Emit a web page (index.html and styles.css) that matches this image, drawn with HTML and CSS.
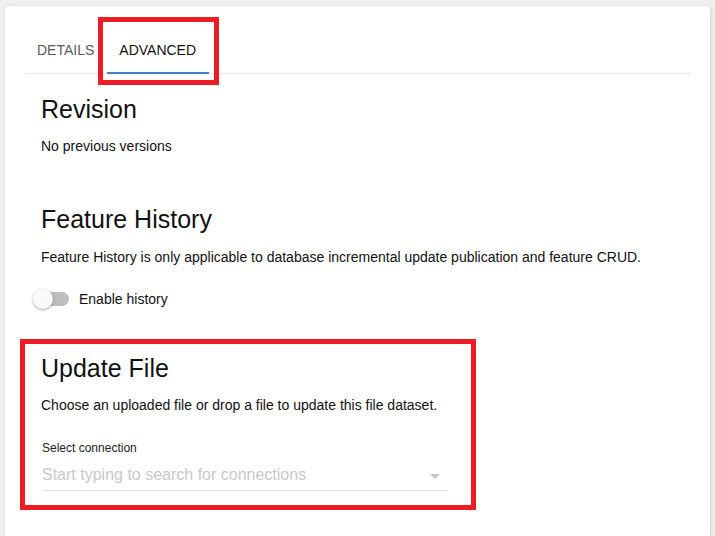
FILE: index.html
```html
<!DOCTYPE html>
<html lang="en">
<head>
    <meta charset="UTF-8">
    <meta name="viewport" content="width=device-width, initial-scale=1.0">
    <title>Dataset Settings</title>
    <link rel="stylesheet" href="styles.css">
</head>
<body>
    <div class="card">
        <div class="tabs">
            <div class="tab">DETAILS</div>
            <div class="tab active">ADVANCED</div>
        </div>

        <div class="content">
            <div class="section revision">
                <h2>Revision</h2>
                <p>No previous versions</p>
            </div>

            <div class="section history">
                <h2>Feature History</h2>
                <p>Feature History is only applicable to database incremental update publication and feature CRUD.</p>
                <label class="toggle-row">
                    <span class="toggle"><span class="knob"></span></span>
                    <span class="toggle-label">Enable history</span>
                </label>
            </div>

            <div class="section update">
                <h2>Update File</h2>
                <p>Choose an uploaded file or drop a file to update this file dataset.</p>
                <div class="field">
                    <div class="field-label">Select connection</div>
                    <div class="field-input">
                        <span class="placeholder">Start typing to search for connections</span>
                        <span class="arrow"></span>
                    </div>
                </div>
            </div>
        </div>
    </div>

    <!-- annotation boxes -->
    <div class="mark mark-tab"></div>
    <div class="mark mark-update"></div>
</body>
</html>
```

FILE: styles.css
```css
body {
    font-family: "Liberation Sans", Arial, sans-serif;
    background-color: #efefef;
    margin: 0;
    padding: 6px 5px 0 5px;
    color: #111;
    height: 536px;
    box-sizing: border-box;
    overflow: hidden;
}
.card {
    background-color: #fff;
    border-radius: 4px 4px 0 0;
    box-shadow: 1px 1px 4px rgba(0, 0, 0, 0.12);
    padding: 20px 20px 0 20px;
    height: 530px;
    box-sizing: border-box;
}
.tabs {
    display: flex;
    border-bottom: 1px solid #e8e8e8;
}
.tab {
    position: relative;
    height: 47px;
    line-height: 49px;
    padding: 0 13px 0 12px;
    font-size: 14px;
    color: #5a5a5a;
}
.tab.active {
    color: #111;
}
.tab.active::after {
    content: "";
    position: absolute;
    left: 0;
    right: 0;
    bottom: -1px;
    height: 2px;
    background-color: #4281c6;
}
.content {
    padding-left: 16px;
}
.section h2 {
    font-size: 25px;
    font-weight: normal;
    line-height: 28px;
    margin: 0;
    color: #111;
}
.section p {
    font-size: 14px;
    line-height: 19px;
    margin: 14px 0 0 0;
}
.revision {
    padding-top: 21px;
}
.history {
    padding-top: 49px;
}
.history p {
    margin-top: 15px;
}
.update {
    padding-top: 45px;
}
.toggle-row {
    display: flex;
    align-items: center;
    height: 20px;
    margin-top: 22px;
    margin-left: -8px;
}
.toggle {
    position: relative;
    width: 34px;
    height: 14px;
    border-radius: 7px;
    background-color: #bdbdbd;
    margin-left: 2px;
}
.knob {
    position: absolute;
    left: -2px;
    top: -3px;
    width: 20px;
    height: 20px;
    border-radius: 50%;
    background-color: #fafafa;
    box-shadow: 0 1px 3px rgba(0, 0, 0, 0.35);
}
.toggle-label {
    font-size: 14px;
    line-height: 20px;
    margin-left: 10px;
}
.field {
    width: 406px;
    margin-top: 26px;
    margin-left: 1px;
}
.field-label {
    font-size: 12px;
    line-height: 14px;
    color: #222;
}
.field-input {
    position: relative;
    margin-top: 10px;
    padding-bottom: 5px;
    border-bottom: 1px solid #e0e0e0;
    height: 20px;
}
.placeholder {
    font-size: 16px;
    line-height: 20px;
    color: #c9c9c9;
}
.arrow {
    position: absolute;
    right: 8px;
    top: 9px;
    width: 0;
    height: 0;
    border-left: 5px solid transparent;
    border-right: 5px solid transparent;
    border-top: 5px solid #c6c6c6;
}
.mark {
    position: absolute;
    border: 5px solid #ed1c24;
    box-sizing: border-box;
}
.mark-tab {
    left: 98px;
    top: 17px;
    width: 121px;
    height: 68px;
}
.mark-update {
    left: 20px;
    top: 339px;
    width: 456px;
    height: 171px;
}
```
